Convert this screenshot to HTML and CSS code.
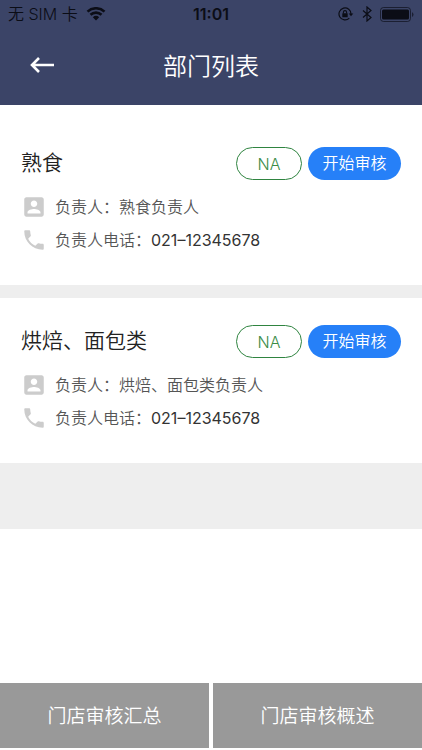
FILE: index.html
```html
<!DOCTYPE html>
<html lang="zh-CN">
<head>
<meta charset="utf-8">
<meta name="viewport" content="width=device-width, initial-scale=1">
<title>部门列表</title>
<link rel="stylesheet" href="styles.css">
</head>
<body>
<svg class="defs" aria-hidden="true">
  <symbol id="person" viewBox="0 0 24 24"><path d="M3 5v14c0 1.100.89 2 2 2h14c1.100 0 2-.9 2-2V5c0-1.100-.9-2-2-2H5c-1.110 0-2 .9-2 2zm12 4c0 1.660-1.340 3-3 3s-3-1.340-3-3 1.340-3 3-3 3 1.340 3 3zm-9 8c0-2 4-3.100 6-3.100s6 1.100 6 3.100v1H6v-1z"/></symbol>
  <symbol id="phone" viewBox="0 0 24 24"><path d="M6.620 10.790c1.440 2.830 3.760 5.140 6.590 6.590l2.200-2.200c.27-.27.67-.36 1.020-.24 1.120.37 2.330.57 3.570.57.550 0 1 .45 1 1V20c0 .55-.45 1-1 1-9.390 0-17-7.610-17-17 0-.55.45-1 1-1h3.500c.55 0 1 .45 1 1 0 1.250.2 2.450.57 3.570.11.350.03.740-.25 1.020l-2.200 2.200z"/></symbol>
</svg>
<div class="app">
  <header class="header">
    <div class="status">
      <div class="status-side">
        <span>无 SIM 卡</span>
        <svg class="wifi" viewBox="0 0 20 14" aria-hidden="true"><path d="M1.500 4.600a12.500 12.500 0 0 1 17 0M4.500 7.800a8 8 0 0 1 11 0" fill="none" stroke="currentColor" stroke-width="2.600"/><path d="M6.800 10.200a4.700 4.700 0 0 1 6.400 0L10 13.500z" fill="currentColor"/></svg>
      </div>
      <time class="time">11:01</time>
      <div class="status-side status-right">
        <svg class="lock" viewBox="0 0 16 14" aria-hidden="true"><path d="M11.300 11.100A6 6 0 1 1 13 7" fill="none" stroke="currentColor" stroke-width="1.200"/><path d="M10.700 6.500h4.600L13 9.300z" fill="currentColor"/><rect x="4.300" y="6.300" width="5.400" height="4" rx=".5" fill="currentColor"/><path d="M5.400 6.500V5.200a1.600 1.600 0 0 1 3.200 0v1.300" fill="none" stroke="currentColor" stroke-width="1.100"/></svg>
        <svg class="bluetooth" viewBox="0 0 10 16" aria-hidden="true"><path d="M1 4.500l8 7L5 15V1l4 3.500-8 7" fill="none" stroke="currentColor" stroke-width="1.200"/></svg>
        <svg class="battery" viewBox="0 0 34 15" aria-hidden="true"><rect x=".5" y=".5" width="30" height="14" rx="3" fill="none" stroke="currentColor" opacity=".65"/><rect x="2" y="2.500" width="27" height="10" rx="1.500" fill="currentColor"/><path d="M32 5v5q1.500-1 1.500-2.500T32 5z" fill="currentColor" opacity=".65"/></svg>
      </div>
    </div>
    <div class="navbar">
      <button class="back" type="button" aria-label="返回"><svg viewBox="0 0 24 16" aria-hidden="true"><path d="M24 8H2M9 1L2 8l7 7" fill="none" stroke="currentColor" stroke-width="2.600"/></svg></button>
      <h1 class="title">部门列表</h1>
    </div>
  </header>
  <main class="list">
    <section class="card">
      <div class="card-head">
        <h2 class="name">熟食</h2>
        <button class="pill na" type="button">NA</button>
        <button class="pill start" type="button">开始审核</button>
      </div>
      <p class="row"><svg class="icon" aria-hidden="true"><use href="#person"/></svg><span>负责人：熟食负责人</span></p>
      <p class="row"><svg class="icon" aria-hidden="true"><use href="#phone"/></svg><span>负责人电话：<a class="tel" href="tel:02112345678">021–12345678</a></span></p>
    </section>
    <section class="card">
      <div class="card-head">
        <h2 class="name">烘焙、面包类</h2>
        <button class="pill na" type="button">NA</button>
        <button class="pill start" type="button">开始审核</button>
      </div>
      <p class="row"><svg class="icon" aria-hidden="true"><use href="#person"/></svg><span>负责人：烘焙、面包类负责人</span></p>
      <p class="row"><svg class="icon" aria-hidden="true"><use href="#phone"/></svg><span>负责人电话：<a class="tel" href="tel:02112345678">021–12345678</a></span></p>
    </section>
  </main>
  <footer class="footer">
    <button class="summary" type="button">门店审核汇总</button>
    <button class="summary" type="button">门店审核概述</button>
  </footer>
</div>
</body>
</html>
```
FILE: styles.css
```css
* {
  box-sizing: border-box;
}

body {
  margin: 0;
  background: #fff;
  color: #222;
  font-family: Inter, "Noto Sans CJK SC", sans-serif;
  font-weight: 350;
}

button {
  padding: 0;
  border: 0;
  font: inherit;
}

h1, h2, p {
  margin: 0;
  font-weight: inherit;
}

.defs {
  display: none;
}

.app {
  display: flex;
  flex-direction: column;
  min-height: 100vh;
}

.header {
  background: #3b4467;
}

.status {
  display: flex;
  align-items: center;
  height: 28px;
  padding: 0 8px;
  color: #0b0d16;
  font-size: 16px;
  line-height: 24px;
}

.status-side {
  display: flex;
  flex: 1;
  align-items: center;
  gap: 8px;
}

.status-right {
  justify-content: flex-end;
}

.time {
  font-size: 16px;
  font-weight: 600;
}

.wifi {
  width: 20px;
  height: 14px;
}

.lock {
  width: 16px;
  height: 14px;
}

.bluetooth {
  width: 10px;
  height: 16px;
}

.battery {
  width: 34px;
  height: 15px;
}

.navbar {
  display: grid;
  grid-template-columns: 54px 1fr 54px;
  align-items: center;
  height: 77px;
  color: #fff;
}

.back {
  display: flex;
  justify-content: flex-end;
  padding-bottom: 3px;
  background: none;
  color: inherit;
}

.back svg {
  width: 24px;
  height: 16px;
}

.title {
  font-size: 24px;
  line-height: 36px;
  text-align: center;
}

.list {
  display: flex;
  flex-direction: column;
  gap: 13px;
  padding-bottom: 66px;
  border-top: 15px solid #fff;
  background: #eee;
}

.card {
  padding: 27px 21px 29px;
  background: #fff;
}

.card-head {
  display: flex;
  align-items: center;
  gap: 6px;
  margin-bottom: 10px;
}

.name {
  flex: 1;
  padding-bottom: 2px;
  font-size: 21px;
  line-height: 30px;
}

.pill {
  height: 33px;
  border-radius: 17px;
  font-size: 16px;
}

.na {
  width: 66px;
  border: 1px solid #2f8440;
  background: #fff;
  color: #3b8c47;
}

.start {
  width: 93px;
  padding-bottom: 3px;
  background: #2680f8;
  color: #fff;
}

.row {
  display: flex;
  align-items: center;
  gap: 8px;
  height: 33px;
  color: #555;
  font-size: 16px;
  line-height: 24px;
}

.icon {
  width: 26px;
  height: 26px;
  fill: #ccc;
}

.tel {
  color: #333;
  font-weight: 400;
  text-decoration: none;
}

.footer {
  display: grid;
  grid-template-columns: 1fr 1fr;
  gap: 4px;
  margin-top: auto;
  padding-bottom: 2px;
}

.summary {
  height: 65px;
  padding-bottom: 2px;
  background: #999;
  color: #fff;
  font-size: 19px;
}
```
